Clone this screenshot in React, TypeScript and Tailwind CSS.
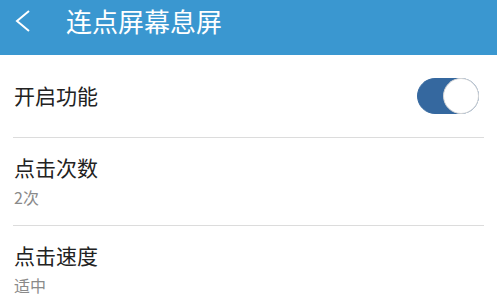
import { useState } from 'react';

const font = { fontFamily: '"Noto Sans CJK SC", "Noto Sans", sans-serif' };

const Toggle = ({ on, onChange }: { on: boolean; onChange: () => void }) => (
  <button
    type="button"
    onClick={onChange}
    className={`relative w-[62px] h-[36px] rounded-full border ${
      on ? 'bg-[#35689f] border-[#35689f]' : 'bg-[#e5e5e5] border-[#d9d9d9]'
    }`}
  >
    <span
      className={`absolute top-[-1px] w-[36px] h-[36px] rounded-full bg-white border border-[#d6d6d6] ${
        on ? 'right-[-1px]' : 'left-[-1px]'
      }`}
    />
  </button>
);

export default function App() {
  const [enabled, setEnabled] = useState(true);

  return (
    <div className="w-[497px] h-[296px] bg-white overflow-hidden" style={font}>
      <div className="h-[55px] bg-[#3a97d0] flex items-start pt-[3px]">
        <div className="w-[66px] h-[36px] flex items-center pl-[15px]">
          <svg width="16" height="22" viewBox="0 0 16 22" fill="none">
            <path d="M14 1 L2 11 L14 21" stroke="white" strokeWidth="2" />
          </svg>
        </div>
        <div className="text-white text-[26px] leading-[36px]">连点屏幕息屏</div>
      </div>

      <div className="h-[82px] flex items-center justify-between pl-[14px] pr-[18px]">
        <span className="text-[21px] leading-[28px] text-[#222] mt-[-2px]">开启功能</span>
        <Toggle on={enabled} onChange={() => setEnabled(!enabled)} />
      </div>

      <div className="mx-[13px] h-px bg-[#dcdcdc]" />

      <div className="pl-[14px] pt-[15px] pb-[18px]">
        <div className="text-[21px] leading-[28px] text-[#222]">点击次数</div>
        <div className="mt-[6px] text-[16px] leading-[20px] text-[#8a8a8a]">2次</div>
      </div>

      <div className="mx-[13px] h-px bg-[#dcdcdc]" />

      <div className="pl-[14px] pt-[15px] pb-[18px]">
        <div className="text-[21px] leading-[28px] text-[#222]">点击速度</div>
        <div className="mt-[6px] text-[16px] leading-[20px] text-[#8a8a8a]">适中</div>
      </div>
    </div>
  );
}
